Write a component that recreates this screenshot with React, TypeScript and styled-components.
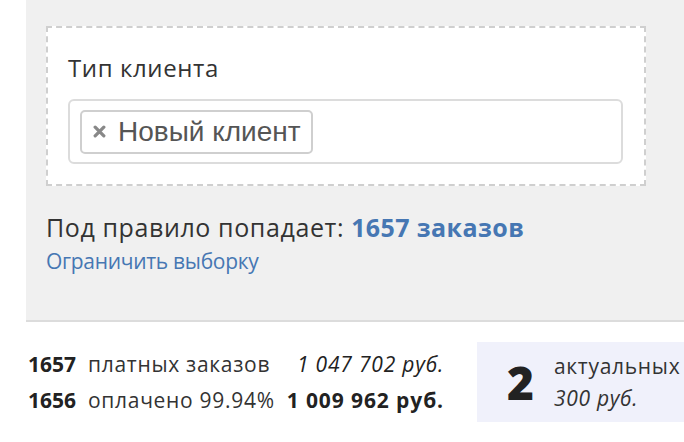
import React from 'react';
import styled, { createGlobalStyle } from 'styled-components';

const GlobalStyle = createGlobalStyle`
  body {
    margin: 0;
    background: #fff;
    font-family: "Open Sans", "Liberation Sans", sans-serif;
    color: #333;
  }
`;

const Page = styled.div`
  width: 684px;
  padding-left: 26px;
  box-sizing: border-box;
`;

const Panel = styled.section`
  background: #f0f0f0;
  border-bottom: 2px solid #dcdcdc;
  padding: 26px 38px 0 20px;
  height: 322px;
  box-sizing: border-box;
`;

const RuleBox = styled.div`
  background: #fff;
  border: 2px dashed #cfcfcf;
  height: 160px;
  box-sizing: border-box;
  padding: 24px 21px 0 20px;
`;

const Label = styled.div`
  font-size: 24px;
  line-height: 32px;
  color: #333;
  margin-bottom: 15px;
  letter-spacing: 0.6px;
`;

const TagInput = styled.div`
  display: flex;
  align-items: center;
  height: 65px;
  box-sizing: border-box;
  border: 2px solid #dcdcdc;
  border-radius: 6px;
  padding: 0 10px;
`;

const Chip = styled.span`
  display: inline-flex;
  align-items: center;
  gap: 12px;
  height: 44px;
  box-sizing: border-box;
  padding: 0 10px 0 11px;
  border: 2px solid #cfcfcf;
  border-radius: 5px;
  font-family: "Liberation Sans", Arial, sans-serif;
  font-size: 28px;
  color: #555;
`;

const RemoveIcon = styled.svg`
  width: 13px;
  height: 13px;
  flex: none;
`;

const Summary = styled.div`
  margin-top: 25px;
  font-size: 25px;
  line-height: 32px;
  letter-spacing: 0.6px;
`;

const Accent = styled.b`
  color: #4677b3;
  font-weight: 700;
  letter-spacing: 0.4px;
`;

const Link = styled.a`
  display: block;
  margin-top: 4px;
  font-size: 21px;
  color: #4677b3;
  text-decoration: none;
  letter-spacing: -0.3px;
`;

const Stats = styled.div`
  display: flex;
  align-items: center;
  justify-content: space-between;
  padding: 20px 0 0 2px;
`;

const StatTable = styled.div`
  display: grid;
  grid-template-columns: auto auto auto;
  column-gap: 12px;
  row-gap: 6px;
  font-size: 21px;
  line-height: 30px;
  letter-spacing: 0.7px;
`;

const Num = styled.b`
  font-weight: 700;
  color: #222;
  letter-spacing: 0;
  font-size: 21px;
`;

const Amount = styled.span<{ $bold?: boolean }>`
  text-align: right;
  font-style: ${p => (p.$bold ? 'normal' : 'italic')};
  font-weight: ${p => (p.$bold ? 700 : 400)};
  letter-spacing: ${p => (p.$bold ? '0.9px' : '0.8px')};
  color: #222;
`;

const ActualBox = styled.div`
  display: flex;
  align-items: center;
  gap: 20px;
  width: 207px;
  height: 80px;
  box-sizing: border-box;
  background: #f0f1fb;
  padding-left: 30px;
`;

const BigNum = styled.div`
  font-size: 46px;
  font-weight: 800;
  color: #222;
`;

const ActualText = styled.div`
  font-size: 21px;
  line-height: 32px;
  letter-spacing: 0.7px;
  & i {
    display: block;
  }
`;

export default function App() {
  return (
    <Page>
      <GlobalStyle />
      <Panel>
        <RuleBox>
          <Label>Тип клиента</Label>
          <TagInput>
            <Chip>
              <RemoveIcon viewBox="0 0 12 12">
                <path d="M2 2 L10 10 M10 2 L2 10" stroke="#888" strokeWidth="3" strokeLinecap="round" />
              </RemoveIcon>
              Новый клиент
            </Chip>
          </TagInput>
        </RuleBox>
        <Summary>
          Под правило попадает: <Accent>1657 заказов</Accent>
        </Summary>
        <Link href="#">Ограничить выборку</Link>
      </Panel>
      <Stats>
        <StatTable>
          <Num>1657</Num>
          <span>платных заказов</span>
          <Amount>1 047 702 руб.</Amount>
          <Num>1656</Num>
          <span>оплачено 99.94%</span>
          <Amount $bold>1 009 962 руб.</Amount>
        </StatTable>
        <ActualBox>
          <BigNum>2</BigNum>
          <ActualText>
            актуальных
            <i>300 руб.</i>
          </ActualText>
        </ActualBox>
      </Stats>
    </Page>
  );
}
